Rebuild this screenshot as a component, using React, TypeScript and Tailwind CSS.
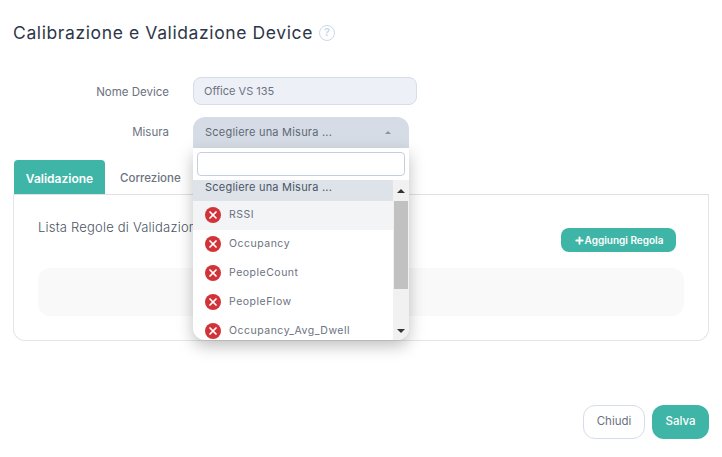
import React from 'react';
import { Plus, X } from 'lucide-react';

const OPTIONS = ['RSSI', 'Occupancy', 'PeopleCount', 'PeopleFlow', 'Occupancy_Avg_Dwell'];

const ErrorIcon = () => (
  <span className="w-4 h-4 shrink-0 rounded-full bg-[#d13438] flex items-center justify-center">
    <X size={12} strokeWidth={3.5} className="text-white" />
  </span>
);

const Dropdown = () => (
  <div className="absolute left-0 top-[31px] w-[216px] h-[192px] bg-white rounded-b-xl shadow-[0_6px_16px_rgba(0,0,0,0.25)] overflow-hidden z-10">
    <div className="px-1 pt-1 h-8">
      <div className="h-6 bg-white border border-[#c5cde0] rounded" />
    </div>
    <div className="flex h-40">
      <div className="w-[200px] overflow-hidden">
        <div className="h-[21px] bg-[#dee3ea] pl-3 text-[11px] leading-[14px] tracking-[0.22px] text-[#4b5563]">Scegliere una Misura ...</div>
        {OPTIONS.map((name, i) => (
          <div key={name} className={`h-[29px] pb-[2px] flex items-center gap-2 pl-3 text-[10.5px] tracking-[0.5px] text-[#6b7280] ${i === 0 ? 'bg-[#f3f4f6]' : ''}`}>
            <ErrorIcon />
            <span>{name}</span>
          </div>
        ))}
      </div>
      <div className="w-4 bg-[#f1f1f1] flex flex-col items-center">
        <div className="h-[21px] flex items-center justify-center">
          <span className="w-0 h-0 border-x-[4px] border-x-transparent border-b-[4px] border-b-[#333]" />
        </div>
        <div className="w-[14px] h-[88px] bg-[#c1c1c1]" />
        <div className="flex-1 flex items-end justify-center pb-[7px]">
          <span className="w-0 h-0 border-x-[4px] border-x-transparent border-t-[4px] border-t-[#333]" />
        </div>
      </div>
    </div>
  </div>
);

export default function App() {
  return (
    <div className="w-[722px] h-[457px] bg-white relative overflow-hidden font-['Inter','Noto_Sans',sans-serif] text-[#6b7280]">
      <div className="pt-[21px] px-[13px] flex items-center gap-[6px] h-[44px]">
        <h1 className="text-[17.5px] leading-6 font-normal text-[#2d3748] tracking-[0.61px]">Calibrazione e Validazione Device</h1>
        <span className="w-4 h-4 rounded-full border-[1.5px] border-[#c9d9ea] text-[#c9d9ea] text-[11px] font-semibold flex items-center justify-center">?</span>
      </div>

      <div className="mt-[33px] flex items-center h-7">
        <label className="w-[169px] pt-[3px] text-right text-[11.5px] text-[#6b7280]">Nome Device</label>
        <div className="ml-6 w-[224px] h-7 bg-[#edf0f6] border border-[#d5dde8] rounded-lg pl-[10px] flex items-center text-[11px] text-[#6b7280]">
          Office VS 135
        </div>
      </div>

      <div className="mt-3 flex items-start h-[31px]">
        <label className="w-[169px] pt-px text-right text-[11.5px] leading-7 text-[#6b7280]">Misura</label>
        <div className="ml-6 relative">
          <div className="w-[216px] h-[31px] bg-[#d6dce5] rounded-t-xl pl-3 pr-[18px] flex items-center justify-between text-[11px] tracking-[0.22px] text-[#5f6875]">
            <span>Scegliere una Misura ...</span>
            <span className="w-0 h-0 border-x-[3px] border-x-transparent border-b-[3px] border-b-[#8a94a3]" />
          </div>
          <Dropdown />
        </div>
      </div>

      <div className="mt-[13px] ml-[13px] w-[696px]">
        <div className="flex h-[34px] items-end border-b border-[#dee2e6] pl-px">
          <div className="w-[91px] h-[34px] pt-[4px] bg-[#3eb5a6] rounded-t flex items-center justify-center text-[12px] font-semibold text-white">Validazione</div>
          <div className="ml-[15px] h-[34px] pt-[4px] flex items-center text-[11.5px] font-medium text-[#6b7280]">Correzione</div>
        </div>
        <div className="h-[146px] border border-t-0 border-[#e2e5e9] rounded-b-xl px-6 pt-[22px]">
          <div className="flex items-start justify-between pr-2">
            <span className="text-[13px] leading-5 font-light tracking-[0.2px] text-[#4b5563]">Lista Regole di Validazione</span>
            <button className="mt-[11px] w-[115px] h-6 bg-[#3eb5a6] rounded-lg flex items-center justify-center text-[10px] font-semibold text-white">
              <Plus size={11} strokeWidth={4} /> Aggiungi Regola
            </button>
          </div>
          <div className="mt-4 w-[646px] h-12 bg-[#f9f9f9] rounded-xl" />
        </div>
      </div>

      <div className="mt-[64px] pr-[13px] flex justify-end gap-[7px]">
        <button className="w-[62px] h-[34px] bg-white border border-[#d5dde8] rounded-xl text-[11.5px] text-[#6b7280]">Chiudi</button>
        <button className="w-[57px] h-[34px] bg-[#3eb5a6] rounded-xl text-[11.5px] font-medium text-white">Salva</button>
      </div>
    </div>
  );
}
